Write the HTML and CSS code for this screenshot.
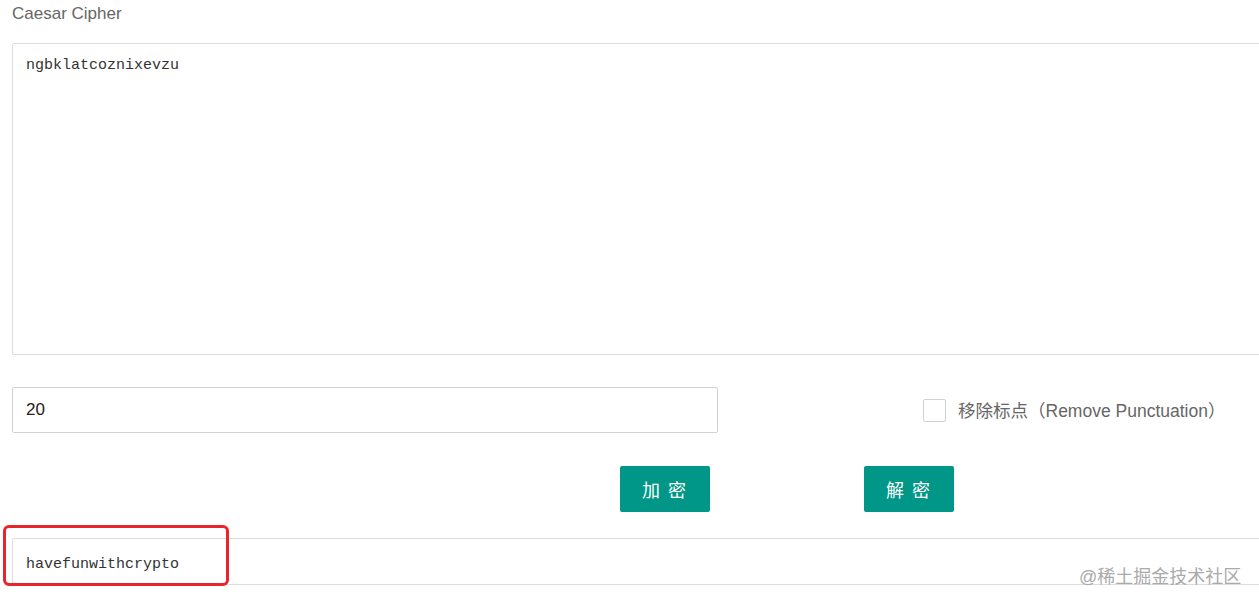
FILE: index.html
```html
<!DOCTYPE html>
<html>
<head>
  <title>Caesar Cipher</title>
  <link rel="stylesheet" href="styles.css">
</head>
<body>
  <div class="page">
    <h2 class="title">Caesar Cipher</h2>

    <textarea class="text-box" id="inputText">ngbklatcoznixevzu</textarea>

    <div class="options-row">
      <input type="text" class="shift-input" id="shiftInput" value="20">
      <label class="check-label">
        <span class="check-box"></span>
        <span class="check-text">移除标点（Remove Punctuation）</span>
      </label>
    </div>

    <div class="btn-row">
      <button class="btn" id="encryptButton">加 密</button>
      <button class="btn" id="decryptButton">解 密</button>
    </div>

    <textarea class="text-box result-box" id="outputText">havefunwithcrypto</textarea>
  </div>

  <div class="highlight"></div>
  <div class="watermark">@稀土掘金技术社区</div>
</body>
</html>
```

FILE: styles.css
```css
html, body {
  margin: 0;
  background-color: #fff;
  overflow: hidden;
}
body {
  font-family: "Liberation Sans", Arial, "Noto Sans CJK SC", sans-serif;
  position: relative;
  height: 603px;
}
.page {
  width: 1300px;
  padding: 4px 0 0 12px;
}
.title {
  margin: 0 0 19px;
  font-size: 17px;
  font-weight: normal;
  line-height: 20px;
  color: #666;
}
.text-box {
  display: block;
  box-sizing: border-box;
  width: 1300px;
  height: 312px;
  margin: 0;
  padding: 12px 13px;
  border: 1px solid #ddd;
  border-radius: 2px;
  font-family: "Liberation Mono", "Courier New", monospace;
  font-size: 15px;
  line-height: 20px;
  color: #333;
  resize: none;
  outline: none;
}
.options-row {
  display: flex;
  align-items: center;
  margin-top: 32px;
}
.shift-input {
  box-sizing: border-box;
  width: 706px;
  height: 46px;
  padding: 0 13px;
  border: 1px solid #d2d2d2;
  border-radius: 2px;
  font-family: "Liberation Sans", Arial, sans-serif;
  font-size: 17px;
  color: #222;
  outline: none;
}
.check-label {
  display: flex;
  align-items: center;
  margin-left: 205px;
  margin-top: -2px;
  cursor: pointer;
}
.check-box {
  box-sizing: border-box;
  width: 23px;
  height: 23px;
  margin-top: 2px;
  border: 1px solid #d2d2d2;
  border-radius: 2px;
  background-color: #fff;
}
.check-text {
  margin-left: 12px;
  font-size: 17.5px;
  color: #666;
}
.btn-row {
  display: flex;
  gap: 154px;
  margin-top: 33px;
  padding-left: 608px;
}
.btn {
  width: 90px;
  height: 46px;
  border: none;
  border-radius: 2px;
  background-color: #009688;
  color: #fff;
  font-family: "Noto Sans CJK SC", sans-serif;
  font-size: 18px;
  letter-spacing: 2px;
  cursor: pointer;
}
.result-box {
  height: 47px;
  margin-top: 26px;
  padding: 16px 13px 0;
}
.highlight {
  position: absolute;
  left: 3px;
  top: 525px;
  width: 220px;
  height: 55px;
  border: 3px solid #e8262a;
  border-radius: 6px;
}
.watermark {
  position: absolute;
  left: 1079px;
  top: 562px;
  font-size: 18px;
  color: #aaa;
  font-family: "Liberation Sans", "Noto Sans CJK SC", sans-serif;
}
```
